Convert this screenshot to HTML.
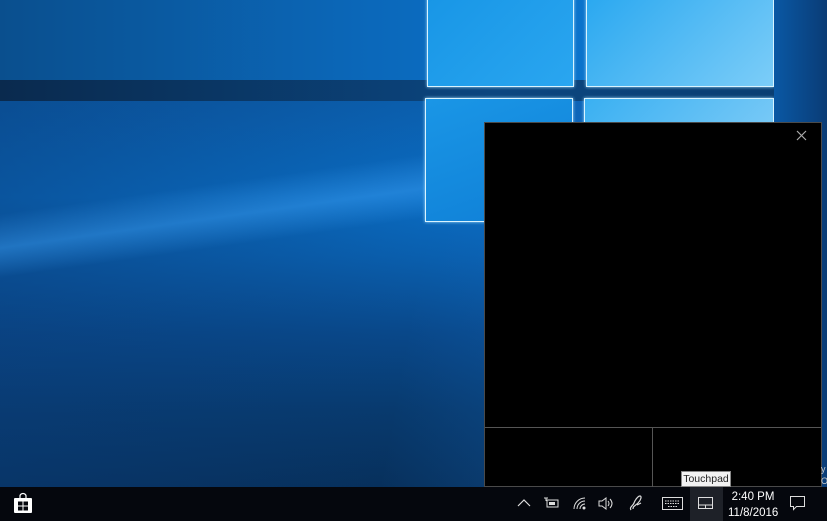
<!DOCTYPE html>
<html><head><style>
*{margin:0;padding:0;box-sizing:border-box}
body{width:827px;height:521px;overflow:hidden;position:relative;font-family:"Liberation Sans",sans-serif;background:#0a5aa8;}
.abs{position:absolute}
.pane{position:absolute;border:1.5px solid #d8f3ff;box-shadow:0 0 3px #9fdcff}
</style></head><body>
<div class="abs" style="left:0;top:0;width:827px;height:80px;background:linear-gradient(90deg,#0a4f8e 0%,#0b68ba 45%,#0a80e0 100%)"></div>
<div class="abs" style="left:0;top:80px;width:827px;height:21px;background:linear-gradient(90deg,#0a2a4e,#0b4680 60%,#0a3d70)"></div>
<div class="abs" style="left:0;top:101px;width:827px;height:386px;background:linear-gradient(180deg,#0b5fae 0%,#0a6cc2 25%,#0a5fae 40%,#09488a 60%,#083a6e 80%,#07305c 100%)"></div>
<div class="abs" style="left:0;top:101px;width:827px;height:386px;background:linear-gradient(100deg,rgba(10,60,120,.5) 0%,rgba(10,60,120,0) 50%,rgba(30,130,230,.3) 80%,rgba(10,60,120,0) 100%)"></div>
<div class="abs" style="left:0;top:150px;width:520px;height:140px;background:linear-gradient(172deg,rgba(0,0,0,0) 30%,rgba(60,160,245,.45) 46%,rgba(20,110,200,0) 60%)"></div>
<div class="pane" style="left:427px;top:-4px;width:147px;height:91px;background:linear-gradient(135deg,#1896e6,#2aa6f0)"></div>
<div class="pane" style="left:586px;top:-4px;width:188px;height:91px;background:linear-gradient(135deg,#2aa8f0,#7ccdf8)"></div>
<div class="pane" style="left:425px;top:98px;width:148px;height:124px;background:linear-gradient(160deg,#1a96e6,#0f7fd6)"></div>
<div class="pane" style="left:584px;top:98px;width:190px;height:30px;background:linear-gradient(135deg,#3ab0f2,#78c9f6)"></div>
<div class="abs" style="left:774px;top:0;width:53px;height:487px;background:linear-gradient(90deg,#0a58a4,#0a3c76)"></div>
<!-- touchpad window -->
<div class="abs" style="left:484px;top:122px;width:338px;height:365px;background:#000;border:1px solid #4a4a4a"></div>
<div class="abs" style="left:485px;top:427px;width:336px;height:1px;background:#555"></div>
<div class="abs" style="left:652px;top:427px;width:1px;height:60px;background:#555"></div>
<svg class="abs" style="left:796px;top:130px" width="11" height="11"><path d="M1 1L10 10M10 1L1 10" stroke="#aaa" stroke-width="1.2"/></svg>
<!-- taskbar -->
<div class="abs" style="left:0;top:487px;width:827px;height:34px;background:#05070d"></div>
<div class="abs" style="left:690px;top:487px;width:33px;height:34px;background:#1e2128"></div>
<svg class="abs" style="left:13px;top:492px" width="20" height="22"><path d="M7 6V4a3 2.5 0 0 1 6 0v2" stroke="#fff" fill="none" stroke-width="1.2"/><rect x="1" y="6" width="18" height="15" rx="1" fill="#fff"/><rect x="5" y="9.5" width="4.5" height="4" fill="#05070d"/><rect x="10.5" y="9.5" width="4.5" height="4" fill="#05070d"/><rect x="5" y="14.5" width="4.5" height="4" fill="#05070d"/><rect x="10.5" y="14.5" width="4.5" height="4" fill="#05070d"/></svg>
<svg class="abs" style="left:517px;top:498px" width="14" height="10"><path d="M1 8L7 2L13 8" stroke="#ddd" fill="none" stroke-width="1.2"/></svg>
<svg class="abs" style="left:543px;top:497px" width="16" height="12"><rect x="4" y="3" width="11" height="7" stroke="#ddd" fill="none"/><rect x="6" y="5" width="6" height="3" fill="#ddd"/><path d="M1 1h4M3 1v3" stroke="#ddd"/></svg>
<svg class="abs" style="left:573px;top:497px" width="14" height="13"><path d="M1 12A11 11 0 0 1 12 1M4 12A8 8 0 0 1 12 4M7 12A5 5 0 0 1 12 7" stroke="#ddd" fill="none"/><circle cx="11" cy="11" r="1.5" fill="#ddd"/></svg>
<svg class="abs" style="left:598px;top:497px" width="16" height="13"><path d="M1 4h3l4-3v11l-4-3H1z" stroke="#ddd" fill="none"/><path d="M10 4q2 2.5 0 5M12 2q4 4.5 0 9" stroke="#ddd" fill="none"/></svg>
<svg class="abs" style="left:628px;top:494px" width="16" height="18"><path d="M3 16c-2-3 2-4 3-7s4-7 6-7 1 4-2 7-5 3-5 6M9 11l4-2" stroke="#ddd" fill="none" stroke-width="1.2"/></svg>
<svg class="abs" style="left:662px;top:497px" width="21" height="13"><rect x="0.5" y="0.5" width="20" height="12" stroke="#ddd" fill="none"/><path d="M3 4h15M3 6.5h15M6 9.5h9" stroke="#ddd" stroke-dasharray="1.5 1"/></svg>
<svg class="abs" style="left:698px;top:497px" width="16" height="13"><rect x="0.5" y="0.5" width="14" height="11" stroke="#ddd" fill="none"/><path d="M1 8h14M7.5 8v4" stroke="#ddd"/></svg>
<div class="abs" style="left:728px;top:489px;width:50px;color:#fff;font-size:11.5px;line-height:16px;text-align:center">2:40 PM<br>11/8/2016</div>
<svg class="abs" style="left:790px;top:496px" width="16" height="15"><path d="M0.5 0.5h14v10h-8l-3 3v-3h-3z" stroke="#ddd" fill="none"/></svg>
<div class="abs" style="left:681px;top:471px;width:50px;height:16px;background:#f2f2f2;border:1px solid #888;color:#222;font-size:10.5px;line-height:14px;text-align:center">Touchpad</div>
<div class="abs" style="left:821px;top:463px;color:#ccc;font-size:9px;line-height:12px">y<br>O</div>
</body></html>
